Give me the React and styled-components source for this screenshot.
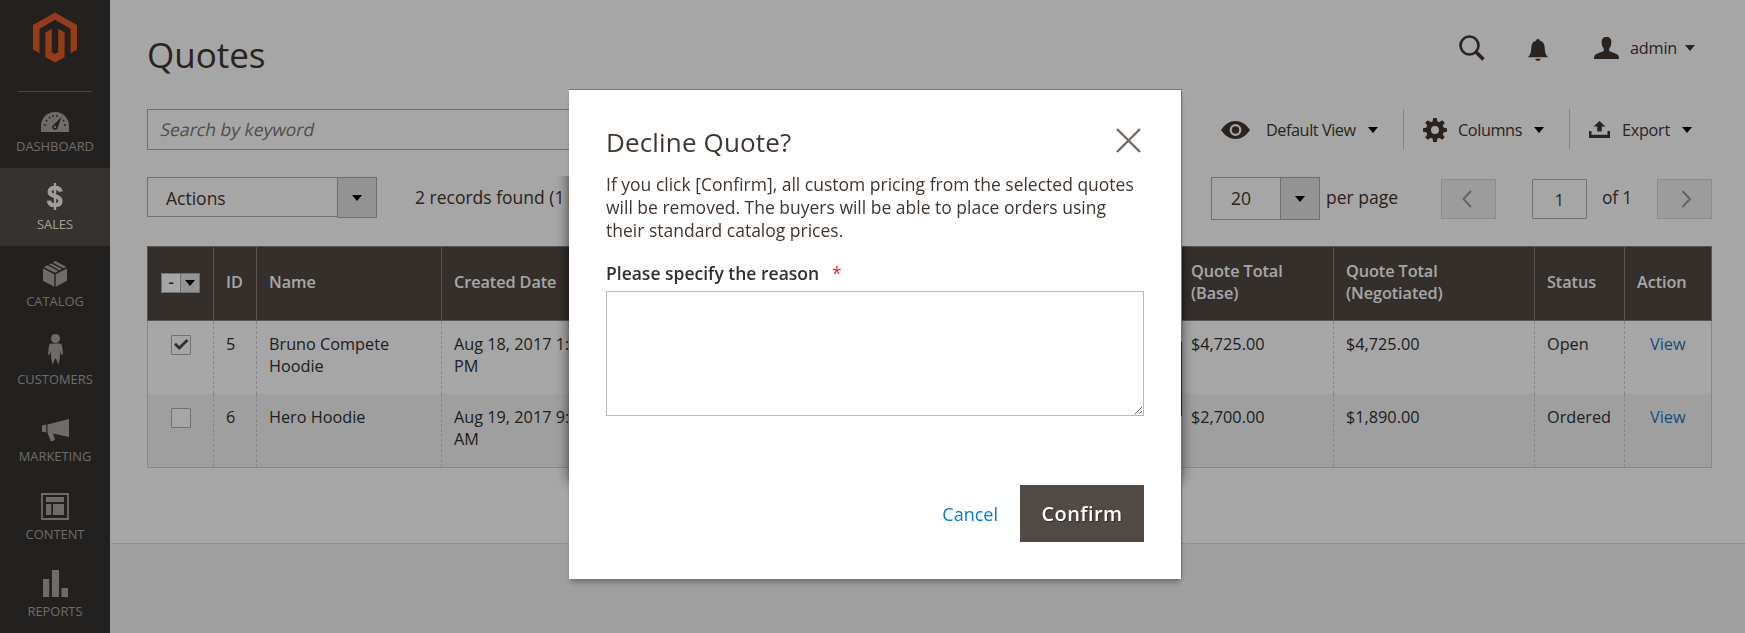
import React from "react";
import styled, { createGlobalStyle, css } from "styled-components";

const GlobalStyle = createGlobalStyle`
  * { box-sizing: border-box; }
  html, body { margin: 0; padding: 0; overflow: hidden; }
  body {
    font-family: "Open Sans", "Noto Sans", sans-serif;
    color: #41362f;
    background: #fff;
  }
`;

const Page = styled.div`
  display: flex;
  width: 1745px;
  height: 633px;
  overflow: hidden;
`;

/* ---------- sidebar ---------- */
const Sidebar = styled.nav`
  width: 110px;
  flex: none;
  background: #373330;
  display: flex;
  flex-direction: column;
`;
const LogoBox = styled.div`
  height: 92px;
  flex: none;
  margin: 0 18px;
  padding: 12px 0 0 15px;
  border-bottom: 1px solid #736963;
`;
const MenuItem = styled.a`
  height: 77.6px;
  flex: none;
  display: flex;
  flex-direction: column;
  align-items: center;
  color: ${(p) => (p.$active ? "#f7f3eb" : "#aaa6a0")};
  background: ${(p) => (p.$active ? "#524d49" : "transparent")};
  font-size: 12.9px;
  line-height: 18px;
  &:first-of-type { height: 76px; }
`;
const MenuIcon = styled.span`
  height: ${(p) => (p.$first ? 45 : 46.5)}px;
  flex: none;
  display: flex;
  align-items: flex-end;
  padding-bottom: 5px;
  svg { display: block; }
`;

/* ---------- main area ---------- */
const Main = styled.main`
  flex: 1;
  display: flex;
  flex-direction: column;
  min-width: 0;
`;
const Content = styled.section`
  height: 543px;
  flex: none;
  padding: 0 33px 0 37px;
`;
const Footer = styled.footer`
  flex: 1;
  margin-left: 1px;
  border-top: 1px solid #dbdbdb;
  background: #f5f5f5;
`;
const Header = styled.header`
  height: 109px;
  display: flex;
  justify-content: space-between;
`;
const Title = styled.h1`
  margin: 31px 0 0;
  font-size: 35px;
  line-height: 48px;
  font-weight: 400;
`;
const HeaderTools = styled.div`
  display: flex;
  align-items: center;
  height: 60px;
  margin-top: 18px;
  padding-right: 17px;
  font-size: 16.25px;
`;
const Glyph = styled.svg`
  display: block;
  flex: none;
  margin-left: ${(p) => p.$gap || 0}px;
  margin-top: ${(p) => p.$drop || 0}px;
`;
const Label = styled.span`
  flex: none;
  white-space: nowrap;
  width: ${(p) => p.$w}px;
  margin-left: ${(p) => p.$gap || 0}px;
  letter-spacing: ${(p) => p.$track || 0}px;
`;
const Caret = styled.i`
  flex: none;
  width: 0;
  height: 0;
  margin-left: ${(p) => p.$gap || 0}px;
  border: 5px solid transparent;
  border-top: 6px solid ${(p) => p.$color || "#000"};
  border-bottom: 0;
`;
const Row = styled.div`
  display: flex;
  justify-content: space-between;
`;
const SearchBox = styled.div`
  width: 520px;
  height: 41px;
  border: 1px solid #adadad;
  padding-left: 13px;
  font-size: 17.5px;
  line-height: 38px;
  color: #7b7573;
`;
const Placeholder = styled.span`
  display: inline-block;
  transform: skewX(-12deg);
`;
const Controls = styled.div`
  display: flex;
  height: 40px;
  font-size: 16.25px;
`;
const Control = styled.div`
  display: flex;
  align-items: center;
  padding-top: 1px;
  padding-right: ${(p) => p.$end}px;
  ${(p) => p.$divided && css`border-left: 1px solid #cacaca;`}
`;

const Toolbar = styled.div`
  display: flex;
  justify-content: space-between;
  margin-top: 27px;
  height: 69px;
  font-size: 17.5px;
`;
const Group = styled.div`
  display: flex;
  align-items: flex-start;
  line-height: 41px;
`;
const Select = styled.div`
  display: flex;
  align-items: flex-start;
  width: ${(p) => p.$w}px;
  height: ${(p) => p.$h}px;
  border: 1px solid #adadad;
  padding-left: ${(p) => p.$pad}px;
  line-height: 40px;
  justify-content: space-between;
`;
const SelectArrow = styled.span`
  width: 40px;
  height: ${(p) => p.$h}px;
  margin: -1px;
  flex: none;
  border: 1px solid #adadad;
  background: #e3e3e3;
  display: flex;
  align-items: center;
  justify-content: center;
`;
const PageButton = styled.button`
  width: 55px;
  height: 40px;
  padding: 0;
  margin: 2px 0 0 ${(p) => p.$gap}px;
  border: 1px solid #d6d6d6;
  background: #f0f0f0;
  display: flex;
  align-items: center;
  justify-content: center;
`;
const PageInput = styled.div`
  width: 55px;
  height: 40px;
  margin: 2px 0 0 36px;
  border: 1px solid #adadad;
  border-radius: 1px;
  text-align: center;
  font-size: 16.25px;
  line-height: 40px;
`;

/* ---------- grid ---------- */
const columns = "65px 43px 185px 185px 552px 155px 201px 90px 89px";
const Grid = styled.div`
  border: 1px solid #cfcfcf;
  border-top: 0;
  font-size: 16.25px;
  line-height: 22px;
`;
const GridHead = styled.div`
  display: grid;
  grid-template-columns: ${columns};
  height: 75px;
  margin: 0 -1px;
  background: #514943;
  color: #fff;
  font-weight: 600;
  border: 1px solid #8a837f;
`;
const HeadCell = styled.div`
  display: flex;
  align-items: center;
  padding: 0 11px 4px 12px;
  letter-spacing: -0.08px;
  border-left: ${(p) => (p.$first ? "0" : "1px solid #8a837f")};
  &:last-child { padding-right: 0; }
`;
const GridRow = styled.div`
  display: grid;
  grid-template-columns: ${columns};
  height: 73px;
  color: #303030;
  background: ${(p) => (p.$odd ? "#f5f5f5" : "#fff")};
`;
const Cell = styled.div`
  padding: 12px 10px 0 12px;
  border-left: ${(p) => (p.$first ? "0" : "1px dashed #d0d0d0")};
  ${(p) => p.$first && css`padding: 14px 0 0 23px;`}
`;
const ViewLink = styled.a`
  color: #1979c3;
  margin-left: 13px;
`;
const Checkbox = styled.span`
  display: flex;
  width: 20px;
  height: 20px;
  border: 1px solid #adadad;
  border-radius: 1px;
  background: #fff;
`;
const MultiSelect = styled.span`
  display: flex;
  width: 39px;
  height: 20px;
  flex: none;
  margin-left: 1px;
  margin-top: 3px;
  border: 1px solid #adadad;
  background: #fff;
  color: #303030;
  line-height: 17px;
`;
const MultiMark = styled.span`
  width: 18px;
  text-align: center;
`;
const MultiArrow = styled.span`
  flex: 1;
  border-left: 1px solid #adadad;
  background: #e3e3e3;
  display: flex;
  align-items: center;
  justify-content: center;
`;

/* ---------- modal ---------- */
const Backdrop = styled.div`
  position: fixed;
  inset: 0;
  background: rgba(0, 0, 0, 0.35);
`;
const PanelShadow = styled.div`
  position: fixed;
  left: 569px;
  top: 160px;
  width: 612px;
  height: 320px;
  box-shadow: 0 0 12px 1px rgba(0, 0, 0, 0.5);
  clip-path: polygon(-20px 16px, 50% 16px, 50% 86px, 640px 86px, 640px 350px, -20px 350px);
`;
const Dialog = styled.div`
  position: fixed;
  left: 569px;
  top: 89px;
  width: 613px;
  height: 490px;
  background: #fff;
  border-top: 1px solid #7f7a66;
  border-right: 1px solid #747474;
  box-shadow: 0 5px 6px -2px rgba(0, 0, 0, 0.35);
  padding: 37px 37px 0;
  &::after {
    content: "";
    position: absolute;
    right: -1px;
    top: 252px;
    width: 1px;
    height: 74px;
    background: #222;
  }
`;
const DialogHead = styled.div`
  display: flex;
  justify-content: space-between;
  align-items: flex-start;
  height: 46px;
  padding-right: 3px;
  svg { margin-top: 1px; }
`;
const DialogTitle = styled.h2`
  margin: -2px 0 0;
  font-size: 26px;
  line-height: 34px;
  font-weight: 400;
  letter-spacing: 0.15px;
`;
const DialogText = styled.p`
  margin: 0;
  width: 540px;
  font-size: 17.5px;
  line-height: 23px;
`;
const FieldLabel = styled.label`
  display: block;
  margin-top: 18px;
  height: 31px;
  font-size: 17.5px;
  line-height: 26px;
  font-weight: 600;
  color: #303030;
`;
const Required = styled.span`
  margin-left: 13px;
  font-weight: 400;
  color: #e22626;
`;
const Reason = styled.textarea`
  display: block;
  width: 538px;
  height: 125px;
  border: 1px solid #bababa;
  border-radius: 0;
  resize: vertical;
  outline: 0;
`;
const DialogActions = styled.div`
  display: flex;
  justify-content: flex-end;
  align-items: center;
  height: 57px;
  margin-top: 69px;
`;
const CancelButton = styled.button`
  border: 0;
  padding: 0;
  background: none;
  font: 400 18px/24px "Open Sans", sans-serif;
  color: #007bdb;
`;
const ConfirmButton = styled.button`
  width: 124px;
  height: 57px;
  margin-left: 22px;
  padding: 0 0 1px;
  border: 1px solid #514943;
  background: #514943;
  color: #fff;
  font: 600 20px/27px "Open Sans", sans-serif;
  letter-spacing: 0.4px;
  text-shadow: 1px 1px 1px rgba(0, 0, 0, 0.4);
`;

const icons = {
  dashboard: (
    <svg width="28" height="20" viewBox="0 0 28 20">
      <path fill="currentColor" d="M0 20V14a14 14 0 0 1 28 0V20Z" />
      <g fill="#373330">
        <circle cx="4" cy="13" r="0.9" /><circle cx="5.6" cy="8.6" r="0.9" />
        <circle cx="8.6" cy="5.6" r="0.9" /><circle cx="12" cy="4" r="0.9" />
        <circle cx="16" cy="4" r="0.9" /><circle cx="22.6" cy="8.6" r="0.9" />
        <circle cx="24" cy="13" r="0.9" />
        <path d="M20.5 5 16.8 15.2A2.8 2.8 0 1 1 12.6 12.7Z" />
      </g>
      <circle cx="14" cy="15" r="1.2" fill="currentColor" />
    </svg>
  ),
  sales: (
    <svg width="18" height="27" viewBox="0 0 18 27">
      <path fill="none" stroke="currentColor" strokeWidth="4.2" d="M14.6 8.6C14.3 5.8 12.2 4.8 9 4.8 6 4.8 3.6 6 3.6 8.8c0 6 10.9 2.8 10.9 9 0 3-2.2 4.4-5.5 4.4-3.5 0-5.8-1.3-6-4.6" />
      <path stroke="currentColor" strokeWidth="2.4" d="M9 0V27" />
    </svg>
  ),
  catalog: (
    <svg width="24" height="26" viewBox="0 0 24 26">
      <g fill="currentColor">
        <path d="M0 7.6 11.3 13.2V25.8L0 19.8ZM24 7.6 12.7 13.2V25.8L24 19.8Z" />
        <path d="M1 6.3 4.6 4.3 15.3 10 12 11.8ZM6 3.6 8.3 2.4 19 8 16.7 9.3ZM9.8 1.6 12.5 0 23.3 6.1 20.5 7.3Z" />
      </g>
    </svg>
  ),
  customers: (
    <svg width="15" height="31" viewBox="0 0 15 31">
      <g fill="currentColor">
        <circle cx="7.5" cy="4.5" r="4.5" />
        <path d="M4 9.5H11C13.5 9.5 14 11 14.2 13L15 20 13.2 21 12 17 11.8 24 10.6 30.5 7.5 24 4.4 30.5 3.2 24 3 17 1.8 21 0 20 .8 13C1 11 1.5 9.5 4 9.5Z" />
      </g>
    </svg>
  ),
  marketing: (
    <svg width="27" height="23" viewBox="0 0 27 23">
      <path fill="currentColor" d="M0 6.5 4.2 5.5V13.5L0 12.5ZM5.5 5.5 27 0V18L11 14.5 13 21 9 22.5 5.5 13.8Z" />
    </svg>
  ),
  content: (
    <svg width="28" height="27" viewBox="0 0 28 27">
      <path fill="none" stroke="currentColor" strokeWidth="1.8" d="M1 1H27V26H1Z" />
      <path fill="currentColor" d="M5 4H23V9H5ZM5 11H10.3V22H5ZM12 11H23V22H12Z" />
    </svg>
  ),
  reports: (
    <svg width="25" height="27" viewBox="0 0 25 27">
      <path fill="currentColor" d="M0 9H6.2V27H0ZM9 0H16V27H9ZM18.5 18H25V27H18.5Z" />
    </svg>
  ),
};

const menu = ["dashboard", "sales", "catalog", "customers", "marketing", "content", "reports"];

const quotes = [
  { id: 5, name: "Bruno Compete Hoodie", created: "Aug 18, 2017 1:39:35 PM", base: "$4,725.00", negotiated: "$4,725.00", status: "Open", checked: true },
  { id: 6, name: "Hero Hoodie", created: "Aug 19, 2017 9:12:18 AM", base: "$2,700.00", negotiated: "$1,890.00", status: "Ordered", checked: false },
];

const teeth = [0, 45, 90, 135, 180, 225, 270, 315];

export default function App() {
  return (
    <>
      <GlobalStyle />
      <Page>
        <Sidebar>
          <LogoBox>
            <svg width="44" height="51" viewBox="0 0 44 51" fill="#e85d22">
              <path d="M22 .5 44 13V37.5L37.6 41.2V16.7L22 7.8 6.5 16.7V41.2L0 37.5V13Z" />
              <path d="M18.8 16.7V40.2L22 42 25.2 40.2V16.7L31.6 20.5V45L22 50.5 12.4 45V20.5Z" />
            </svg>
          </LogoBox>
          {menu.map((name, i) => (
            <MenuItem key={name} $active={name === "sales"}>
              <MenuIcon $first={i === 0}>{icons[name]}</MenuIcon>
              {name.toUpperCase()}
            </MenuItem>
          ))}
        </Sidebar>

        <Main>
          <Content>
            <Header>
              <Title>Quotes</Title>
              <HeaderTools>
                <Glyph width="26" height="26" viewBox="0 0 26 26" fill="none" stroke="#41362f">
                  <circle cx="10.5" cy="10.5" r="9" strokeWidth="2.6" />
                  <path d="M17 17 24.5 24.5" strokeWidth="3.6" />
                </Glyph>
                <Glyph $gap={42.500} $drop={3} width="20" height="22" viewBox="0 0 20 22" fill="#41362f">
                  <path d="M10 0C11.3 0 11.8 1 12 1.8 15.5 2.8 16.6 5.5 16.7 9 16.8 13 17.5 15.5 20 18.2H0C2.5 15.5 3.2 13 3.3 9 3.4 5.5 4.5 2.800 8 1.8 8.2 1 8.7 0 10 0ZM7.3 19.7H12.7C12.5 21 11.5 21.8 10 21.8S7.5 21 7.3 19.7Z" />
                </Glyph>
                <Glyph $gap={46.500} width="25" height="22" viewBox="0 0 25 22" fill="#41362f">
                  <path d="M12.5 0C16 0 17.5 2 17.3 5.5 17.2 8.5 16.2 10.5 15.2 11.5V14L22 16.8C24.2 17.8 25 19 25 22H0C0 19 .8 17.8 3 16.8L9.8 14V11.5C8.8 10.5 7.8 8.5 7.7 5.5 7.5 2 9 0 12.5 0Z" />
                </Glyph>
                <Label $gap={11} $w={46} $track={-0.2}>admin</Label>
                <Caret $gap={9} $color="#41362f" />
              </HeaderTools>
            </Header>

            <Row>
              <SearchBox><Placeholder>Search by keyword</Placeholder></SearchBox>
              <Controls>
                <Control $end={25}>
                  <Glyph width="29" height="18" viewBox="0 0 29 18">
                    <path fill="#41362f" d="M0 9C4 3 9 0 14.5 0S25 3 29 9C25 15 20 18 14.5 18S4 15 0 9Z" />
                    <circle cx="14.5" cy="9" r="4.8" fill="none" stroke="#fff" strokeWidth="2.2" />
                  </Glyph>
                  <Label $gap={16} $w={91} $track={-0.45}>Default View</Label>
                  <Caret $gap={11} />
                </Control>
                <Control $divided $end={25}>
                  <Glyph $gap={19} width="24" height="24" viewBox="-12 -12 24 24" fill="#41362f">
                    <circle r="6.5" fill="none" stroke="#41362f" strokeWidth="5" />
                    {teeth.map((a) => (
                      <path key={a} d="M-2.6-7.5-1.8-12H1.8L2.6-7.5Z" transform={`rotate(${a})`} />
                    ))}
                  </Glyph>
                  <Label $gap={11} $w={66} $track={-0.4}>Columns</Label>
                  <Caret $gap={10} />
                </Control>
                <Control $divided $end={20}>
                  <Glyph $gap={19} width="21" height="17" viewBox="0 0 21 17" fill="#41362f">
                    <path d="M10.5 0 16.5 5.5H12.8V10.5H8.2V5.5H4.5ZM0 10H2.5V13.8H18.5V10H21V17H0Z" />
                  </Glyph>
                  <Label $gap={12} $w={49} $track={-0.3}>Export</Label>
                  <Caret $gap={11} />
                </Control>
              </Controls>
            </Row>

            <Toolbar>
              <Group>
                <Select $w={230} $h={40} $pad={18}>
                  Actions
                  <SelectArrow $h={41}><Caret /></SelectArrow>
                </Select>
                <Label $gap={38} $w={240}>2 records found (1 selected)</Label>
              </Group>
              <Group>
                <Select $w={109} $h={43} $pad={19}>
                  20
                  <SelectArrow $h={43}><Caret /></SelectArrow>
                </Select>
                <Label $gap={6} $w={72}>per page</Label>
                <PageButton $gap={43}>
                  <svg width="14" height="18" viewBox="0 0 14 18" fill="none" stroke="#999" strokeWidth="2"><path d="M9 1 1.5 9 9 17" /></svg>
                </PageButton>
                <PageInput>1</PageInput>
                <Label $gap={15} $w={30} $track={-0.2}>of 1</Label>
                <PageButton $gap={25}>
                  <svg width="14" height="18" viewBox="0 0 14 18" fill="none" stroke="#999" strokeWidth="2"><path d="M4.5 1 12 9 4.5 17" /></svg>
                </PageButton>
              </Group>
            </Toolbar>

            <Grid>
              <GridHead>
                <HeadCell $first>
                  <MultiSelect>
                    <MultiMark>-</MultiMark>
                    <MultiArrow><Caret /></MultiArrow>
                  </MultiSelect>
                </HeadCell>
                <HeadCell>ID</HeadCell>
                <HeadCell>Name</HeadCell>
                <HeadCell>Created Date</HeadCell>
                <HeadCell />
                <HeadCell>Quote Total (Base)</HeadCell>
                <HeadCell>Quote Total<br />(Negotiated)</HeadCell>
                <HeadCell>Status</HeadCell>
                <HeadCell>Action</HeadCell>
              </GridHead>
              {quotes.map((q, i) => (
                <GridRow key={q.id} $odd={i % 2 === 1}>
                  <Cell $first>
                    <Checkbox>
                      {q.checked && (
                        <svg width="18" height="18" viewBox="0 0 18 18" fill="none" stroke="#514943" strokeWidth="2.8">
                          <path d="M3 7.8 7.3 12 15.5 4" />
                        </svg>
                      )}
                    </Checkbox>
                  </Cell>
                  <Cell>{q.id}</Cell>
                  <Cell>{q.name}</Cell>
                  <Cell>{q.created}</Cell>
                  <Cell />
                  <Cell>{q.base}</Cell>
                  <Cell>{q.negotiated}</Cell>
                  <Cell>{q.status}</Cell>
                  <Cell><ViewLink>View</ViewLink></Cell>
                </GridRow>
              ))}
            </Grid>
          </Content>
          <Footer />
        </Main>
      </Page>

      <Backdrop />
      <PanelShadow />
      <Dialog>
        <DialogHead>
          <DialogTitle>Decline Quote?</DialogTitle>
          <svg width="25" height="25" viewBox="0 0 25 25" stroke="#736963" strokeWidth="2.4">
            <path d="M1 1 24 24M24 1 1 24" />
          </svg>
        </DialogHead>
        <DialogText>
          If you click [Confirm], all custom pricing from the selected quotes will be removed. The
          buyers will be able to place orders using their standard catalog prices.
        </DialogText>
        <FieldLabel>
          Please specify the reason<Required>*</Required>
        </FieldLabel>
        <Reason />
        <DialogActions>
          <CancelButton>Cancel</CancelButton>
          <ConfirmButton>Confirm</ConfirmButton>
        </DialogActions>
      </Dialog>
    </>
  );
}
